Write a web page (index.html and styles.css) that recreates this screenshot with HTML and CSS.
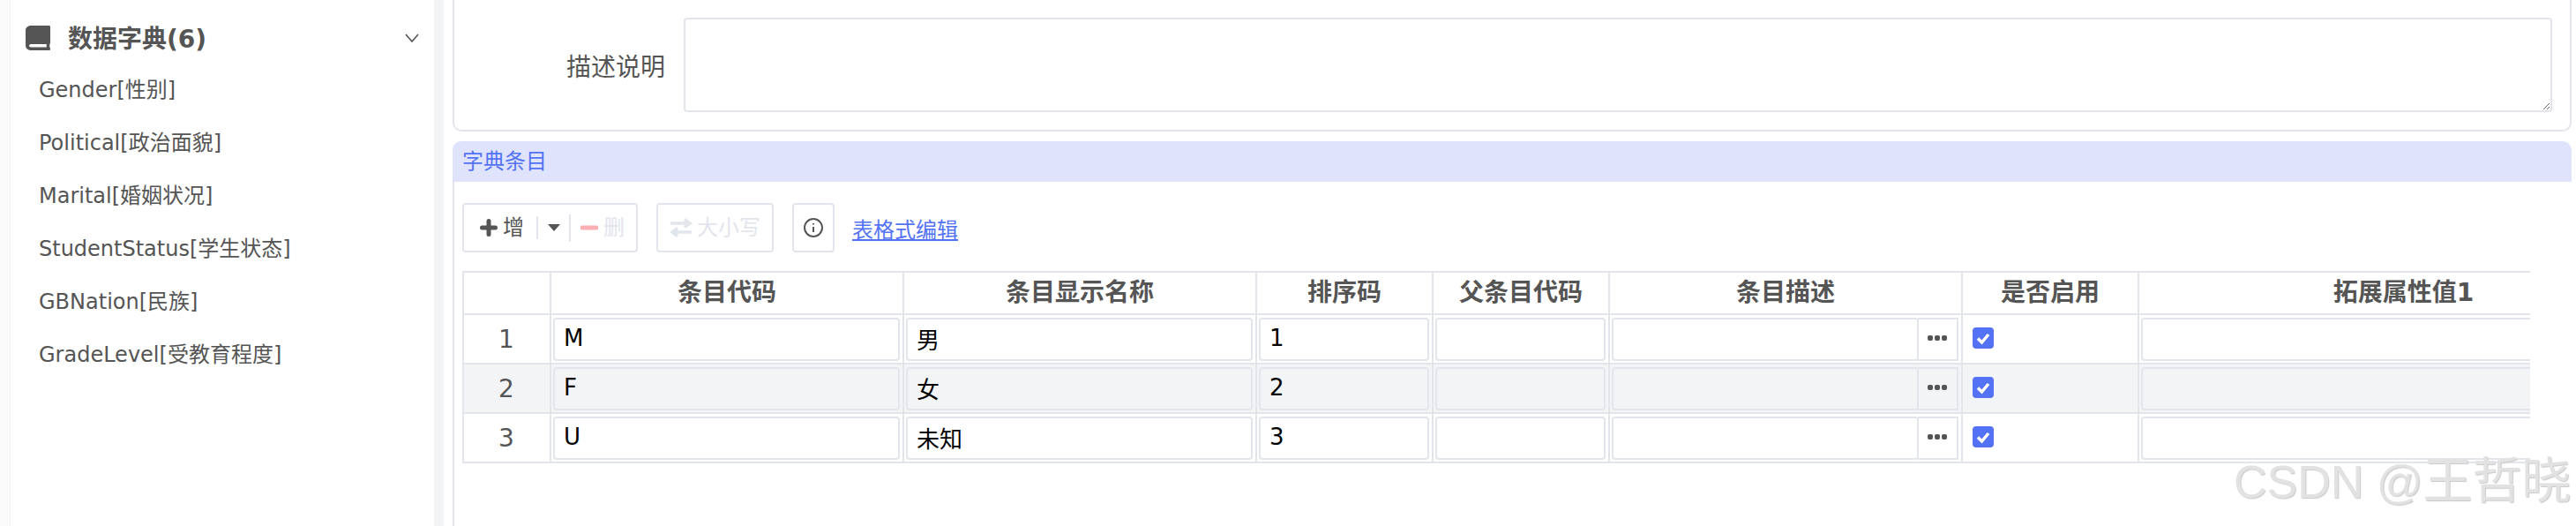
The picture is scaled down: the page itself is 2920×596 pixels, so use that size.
FILE: index.html
```html
<!DOCTYPE html>
<html lang="en">
<head>
    <meta charset="UTF-8">
    <meta name="viewport" content="width=device-width, initial-scale=1.0">
    <title>数据字典</title>
    <link rel="stylesheet" href="styles.css">
</head>
<body>
    <div class="page">
        <aside class="sidebar">
            <div class="tree-head">
                <svg class="book-icon" viewBox="0 0 448 512" preserveAspectRatio="none"><path d="M448 360V24c0-13.3-10.7-24-24-24H96C43 0 0 43 0 96v320c0 53 43 96 96 96h328c13.3 0 24-10.7 24-24v-16c0-7.5-3.5-14.3-8.9-18.7-4.2-15.4-4.2-59.3 0-74.7 5.4-4.3 8.9-11.1 8.9-18.6zM381.4 448H96c-17.7 0-32-14.3-32-32 0-17.6 14.4-32 32-32h285.4c-1.9 17.1-1.9 46.9 0 64z"/></svg>
                <span class="tree-title">数据字典(6)</span>
                <svg class="chevron" viewBox="0 0 16 10"><path d="M1 1l7 8 7-8"/></svg>
            </div>
            <ul class="tree-list">
                <li>Gender[性别]</li>
                <li>Political[政治面貌]</li>
                <li>Marital[婚姻状况]</li>
                <li>StudentStatus[学生状态]</li>
                <li>GBNation[民族]</li>
                <li>GradeLevel[受教育程度]</li>
            </ul>
        </aside>
        <main class="main">
            <div class="desc-card">
                <label class="desc-label">描述说明</label>
                <textarea class="desc-input"></textarea>
            </div>
            <section class="panel">
                <div class="panel-head">字典条目</div>
                <div class="toolbar">
                    <div class="btn-group">
                        <span class="tool-btn">
                            <svg class="icon-plus" viewBox="0 0 20 20"><path d="M10 2.500v15M2.500 10h15"/></svg>增
                        </span>
                        <span class="sep short"></span>
                        <svg class="caret" viewBox="0 0 14 8"><path d="M0 0h14L7 8z"/></svg>
                        <span class="sep"></span>
                        <span class="tool-btn off">
                            <svg class="icon-minus" viewBox="0 0 20 6"><path d="M2 3h16"/></svg>删
                        </span>
                    </div>
                    <div class="btn-group case-btn">
                        <span class="tool-btn off">
                            <svg class="icon-swap" viewBox="0 0 26 22"><path d="M1 6h21M17 1.500L23 6l-6 4.500M25 16H4M9 11.500L3 16l6 4.500"/></svg>大小写
                        </span>
                    </div>
                    <div class="btn-group info-btn">
                        <svg class="icon-info" viewBox="0 0 24 24"><circle cx="12" cy="12" r="10"/><path d="M12 11v6M12 7v1.500"/></svg>
                    </div>
                    <a class="grid-link" href="#">表格式编辑</a>
                </div>
                <div class="table-wrap">
                    <table class="grid">
                        <colgroup>
                            <col class="c-no"><col class="c-lg"><col class="c-lg"><col class="c-sm"><col class="c-sm"><col class="c-lg"><col class="c-sm"><col class="c-xl">
                        </colgroup>
                        <thead>
                            <tr>
                                <th></th>
                                <th>条目代码</th>
                                <th>条目显示名称</th>
                                <th>排序码</th>
                                <th>父条目代码</th>
                                <th>条目描述</th>
                                <th>是否启用</th>
                                <th>拓展属性值1</th>
                            </tr>
                        </thead>
                        <tbody>
                            <tr>
                                <td class="no">1</td>
                                <td><input class="cell-input" value="M"></td>
                                <td><input class="cell-input" value="男"></td>
                                <td><input class="cell-input" value="1"></td>
                                <td><input class="cell-input"></td>
                                <td><div class="pick"><input class="cell-input"><span class="pick-btn"><i></i><i></i><i></i></span></div></td>
                                <td><span class="check"><svg viewBox="0 0 24 24"><path d="M6 12.500l4.500 4.500L18 8"/></svg></span></td>
                                <td><input class="cell-input"></td>
                            </tr>
                            <tr class="alt">
                                <td class="no">2</td>
                                <td><input class="cell-input" value="F"></td>
                                <td><input class="cell-input" value="女"></td>
                                <td><input class="cell-input" value="2"></td>
                                <td><input class="cell-input"></td>
                                <td><div class="pick"><input class="cell-input"><span class="pick-btn"><i></i><i></i><i></i></span></div></td>
                                <td><span class="check"><svg viewBox="0 0 24 24"><path d="M6 12.500l4.500 4.500L18 8"/></svg></span></td>
                                <td><input class="cell-input"></td>
                            </tr>
                            <tr>
                                <td class="no">3</td>
                                <td><input class="cell-input" value="U"></td>
                                <td><input class="cell-input" value="未知"></td>
                                <td><input class="cell-input" value="3"></td>
                                <td><input class="cell-input"></td>
                                <td><div class="pick"><input class="cell-input"><span class="pick-btn"><i></i><i></i><i></i></span></div></td>
                                <td><span class="check"><svg viewBox="0 0 24 24"><path d="M6 12.500l4.500 4.500L18 8"/></svg></span></td>
                                <td><input class="cell-input"></td>
                            </tr>
                        </tbody>
                    </table>
                </div>
            </section>
        </main>
        <div class="watermark">CSDN @<span class="watermark-name">王哲晓</span></div>
    </div>
</body>
</html>
```

FILE: styles.css
```css
* {
    box-sizing: border-box;
}
body {
    margin: 0;
    font-family: "DejaVu Sans", "Noto Sans CJK SC", sans-serif;
    color: #555;
    background-color: #fff;
}
.page {
    position: relative;
    display: flex;
    height: 596px;
    overflow: hidden;
    background-color: #fbfbfc;
}

/* left tree */
.sidebar {
    width: 481px;
    margin-left: 11px;
    padding: 29px 0 0 17px;
    background-color: #fff;
    border-left: 1px solid #f0f1f4;
    flex-shrink: 0;
}
.tree-head {
    display: flex;
    align-items: center;
    height: 28px;
    padding-right: 17px;
}
.book-icon {
    width: 28px;
    height: 28px;
    fill: #555;
}
.tree-title {
    margin-left: 20px;
    padding-top: 4px;
    font-size: 28px;
    line-height: 28px;
    font-weight: bold;
    flex: 1;
}
.chevron {
    width: 16px;
    height: 10px;
    fill: none;
    stroke: #555;
    stroke-width: 1.6;
}
.tree-list {
    list-style: none;
    margin: 15px 0 0;
    padding: 0 0 0 15px;
}
.tree-list li {
    height: 60px;
    line-height: 60px;
    font-size: 24px;
}

/* right side */
.main {
    flex: 1;
    padding: 0 5px 0 10px;
    background-color: #fff;
    border-left: 11px solid #f3f4f6;
}
.desc-card {
    display: flex;
    height: 149px;
    padding: 20px 20px 0 0;
    border: 2px solid #e2e5ec;
    border-top: 0;
    border-radius: 0 0 10px 10px;
}
.desc-label {
    width: 239px;
    padding-top: 37px;
    font-size: 28px;
    line-height: 40px;
    text-align: right;
    flex-shrink: 0;
}
.desc-input {
    display: block;
    flex: 1;
    height: 107px;
    margin-left: 21px;
    border: 2px solid #e2e5ec;
    border-radius: 4px;
    outline: none;
}
.panel {
    height: 436px;
    margin-top: 11px;
    border-left: 2px solid #e2e5ec;
    border-radius: 10px 10px 0 0;
}
.panel-head {
    height: 46px;
    margin-left: -2px;
    padding-left: 11px;
    line-height: 47px;
    font-size: 24px;
    color: #5472f6;
    background-color: #dfe4fc;
    border-radius: 10px 10px 0 0;
}
.toolbar {
    display: flex;
    align-items: center;
    gap: 21px;
    height: 56px;
    margin: 24px 0 0 9px;
}
.btn-group {
    display: flex;
    align-items: center;
    height: 56px;
    padding: 0 13px 0 18px;
    border: 2px solid #e2e5ec;
    border-radius: 4px;
    flex-shrink: 0;
}
.tool-btn {
    display: flex;
    align-items: center;
    font-size: 24px;
    line-height: 30px;
}
.tool-btn.off {
    color: #e2e5ec;
}
.icon-plus {
    width: 20px;
    height: 20px;
    margin-right: 6px;
    fill: none;
    stroke: #555;
    stroke-width: 5;
    stroke-linecap: round;
}
.sep {
    width: 2px;
    height: 31px;
    margin: 0 11px 0 10px;
    background-color: #e2e5ec;
}
.sep.short {
    height: 26px;
    margin: 0 11px 0 14px;
}
.caret {
    width: 14px;
    height: 8px;
    fill: #555;
}
.icon-minus {
    width: 20px;
    height: 6px;
    margin-right: 6px;
    fill: none;
    stroke: #fbb0b5;
    stroke-width: 5;
    stroke-linecap: round;
}
.icon-swap {
    width: 26px;
    height: 22px;
    margin-right: 5px;
    fill: none;
    stroke: #e2e5ec;
    stroke-width: 3.5;
}
.case-btn {
    padding: 0 13px;
}
.info-btn {
    width: 48px;
    justify-content: center;
    padding: 0;
}
.icon-info {
    width: 24px;
    height: 24px;
    fill: none;
    stroke: #555;
    stroke-width: 2;
}
.grid-link {
    margin-left: -1px;
    font-size: 24px;
    color: #5472f6;
}

/* table */
.table-wrap {
    width: 2344px;
    margin: 21px 0 0 9px;
    overflow: hidden;
}
.grid {
    table-layout: fixed;
    width: 2500px;
    border-collapse: collapse;
}
.c-no {
    width: 99px;
}
.c-lg {
    width: 400px;
}
.c-sm {
    width: 200px;
}
.c-xl {
    width: 601px;
}
.grid th,
.grid td {
    border: 2px solid #e2e5ec;
    padding: 0;
}
.grid th {
    height: 48px;
    font-size: 28px;
    font-weight: bold;
    line-height: 40px;
    text-align: center;
}
.grid td {
    height: 56px;
    padding: 3px 3px 2px 2px;
}
.grid td.no {
    font-size: 28px;
    text-align: center;
}
.alt {
    background-color: #f3f4f6;
}
.cell-input {
    display: block;
    width: 100%;
    height: 49px;
    padding: 0 10px 3px;
    font-family: "DejaVu Sans", "Noto Sans CJK SC", sans-serif;
    font-size: 26px;
    color: #000;
    background: transparent;
    border: 2px solid #e2e5ec;
    border-radius: 4px;
    outline: none;
}
.pick {
    display: flex;
    height: 49px;
}
.pick .cell-input {
    flex: 1;
    width: auto;
    min-width: 0;
}
.pick-btn {
    display: flex;
    align-items: center;
    justify-content: center;
    gap: 2px;
    width: 46px;
    margin-left: -1px;
    padding-bottom: 4px;
    border: 2px solid #e2e5ec;
    border-left: 0;
    flex-shrink: 0;
}
.pick-btn i {
    width: 6px;
    height: 6px;
    border-radius: 2px;
    background-color: #555;
}
.check {
    display: block;
    width: 24px;
    height: 24px;
    margin: 0 0 3px 9px;
    border-radius: 4px;
    background-color: #5472f6;
}
.check svg {
    display: block;
    width: 24px;
    height: 24px;
    fill: none;
    stroke: #fff;
    stroke-width: 3.5;
}
.watermark {
    position: absolute;
    left: 2532px;
    top: 512px;
    font-family: "Liberation Sans", "Noto Sans CJK SC", sans-serif;
    font-size: 52px;
    line-height: 66px;
    white-space: nowrap;
    color: #e2e2e2;
    text-shadow: 1px 1px 1px #c9c9c9;
}
.watermark-name {
    font-size: 56px;
}
```
